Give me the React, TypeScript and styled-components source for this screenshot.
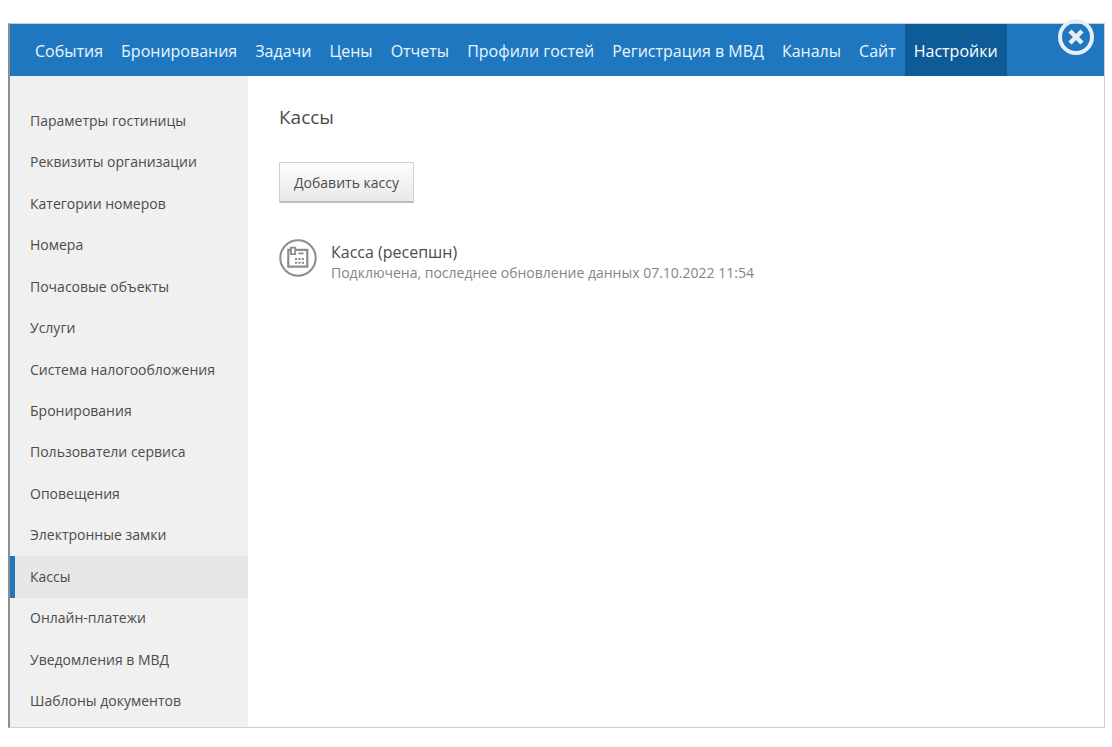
import React from "react";
import styled, { createGlobalStyle } from "styled-components";

const GlobalStyle = createGlobalStyle`
  * { box-sizing: border-box; }
  body {
    margin: 0;
    background: #fff;
    color: #4c4c4c;
    font-family: "Open Sans", "Noto Sans", sans-serif;
    font-size: 14px;
    line-height: 20px;
  }
`;

const Page = styled.div`
  padding: 23px 7px 19px 8px;
`;

const Frame = styled.div`
  border: 1px solid #cfcfcf;
  border-left: 2px solid #8e8e8e;
`;

const Header = styled.header`
  position: relative;
  display: flex;
  background: #1f78bf;
  padding-left: 16px;
`;

const Nav = styled.nav`
  display: flex;
`;

const NavLink = styled.a<{ $active?: boolean }>`
  padding: 17px 9px 15px;
  color: ${(p) => (p.$active ? "#fff" : "#e9f6ff")};
  background: ${(p) => (p.$active ? "#0e5c97" : "transparent")};
  font-size: 16px;
  line-height: 20px;
  text-decoration: none;
  white-space: nowrap;
`;

const CloseButton = styled.button`
  position: absolute;
  top: -6px;
  right: 9px;
  width: 38px;
  height: 38px;
  padding: 0;
  border: 0;
  background: none;
  cursor: pointer;

  svg { display: block; }
`;

const Columns = styled.div`
  display: grid;
  grid-template-columns: 238px 1fr;
`;

const Sidebar = styled.aside`
  padding: 24px 0 5px;
  background: #f0f0f0;
`;

const Menu = styled.ul`
  display: grid;
  grid-auto-rows: 1fr;
  min-height: 622px;
  margin: 0;
  padding: 0;
  list-style: none;
`;

const MenuLink = styled.a<{ $active?: boolean }>`
  display: flex;
  align-items: center;
  height: 100%;
  padding-left: 15px;
  border-left: 5px solid ${(p) => (p.$active ? "#1f78bf" : "transparent")};
  background: ${(p) => (p.$active ? "#e7e7e7" : "transparent")};
  color: #4c4c4c;
  text-decoration: none;
`;

const Content = styled.main`
  padding: 28px 31px;
`;

const Title = styled.h1`
  margin: 0 0 32px;
  font-size: 19px;
  font-weight: 400;
  line-height: 26px;
`;

const AddButton = styled.button`
  display: block;
  height: 41px;
  padding: 2px 14px 0;
  border: 1px solid #d0d0d0;
  border-bottom: 2px solid #bdbdbd;
  border-radius: 1px;
  background: linear-gradient(#fcfcfc, #e9e9e9);
  color: #4c4c4c;
  font: inherit;
  cursor: pointer;
`;

const DeskRow = styled.section`
  display: flex;
  gap: 14px;
  margin-top: 36px;
`;

const DeskName = styled.h2`
  margin: 2px 0 0;
  font-size: 16px;
  font-weight: 400;
  line-height: 22px;
`;

const DeskStatus = styled.p`
  margin: 0;
  color: #858585;
`;

const navItems = [
  "События", "Бронирования", "Задачи", "Цены", "Отчеты", "Профили гостей",
  "Регистрация в МВД", "Каналы", "Сайт", "Настройки",
];

const menuItems = [
  "Параметры гостиницы", "Реквизиты организации", "Категории номеров", "Номера",
  "Почасовые объекты", "Услуги", "Система налогообложения", "Бронирования",
  "Пользователи сервиса", "Оповещения", "Электронные замки", "Кассы",
  "Онлайн-платежи", "Уведомления в МВД", "Шаблоны документов",
];

const CloseIcon = () => (
  <svg width="38" height="38" viewBox="0 0 38 38" fill="none" stroke="#e9eef3" aria-hidden="true">
    <circle cx="19" cy="19" r="16" strokeWidth="4" />
    <path d="M13 13L25 25M25 13L13 25" strokeWidth="4.5" />
  </svg>
);

const DeskIcon = () => (
  <svg width="38" height="38" viewBox="0 0 38 38" fill="none" stroke="#8c8c8c" aria-hidden="true">
    <circle cx="19" cy="19" r="17.7" strokeWidth="2" />
    <path d="M12 10.8H9.3V27.6H28.3V10.8H17" strokeWidth="2.2" />
    <path d="M12 8.6H16.2V15.2H12Z" strokeWidth="1.8" />
    <path d="M19.4 14.4H24.6" strokeWidth="1.8" />
    <path d="M16 20H25.2M16 23.8H25.2" strokeWidth="2" strokeDasharray="2.2 1.2" />
  </svg>
);

export default function App() {
  return (
    <Page>
      <GlobalStyle />
      <Frame>
        <Header>
          <Nav>
            {navItems.map((item) => (
              <NavLink key={item} href="#" $active={item === "Настройки"}>{item}</NavLink>
            ))}
          </Nav>
          <CloseButton type="button" aria-label="Закрыть"><CloseIcon /></CloseButton>
        </Header>
        <Columns>
          <Sidebar>
            <Menu>
              {menuItems.map((item) => (
                <li key={item}>
                  <MenuLink href="#" $active={item === "Кассы"}>{item}</MenuLink>
                </li>
              ))}
            </Menu>
          </Sidebar>
          <Content>
            <Title>Кассы</Title>
            <AddButton type="button">Добавить кассу</AddButton>
            <DeskRow>
              <DeskIcon />
              <div>
                <DeskName>Касса (ресепшн)</DeskName>
                <DeskStatus>Подключена, последнее обновление данных 07.10.2022 11:54</DeskStatus>
              </div>
            </DeskRow>
          </Content>
        </Columns>
      </Frame>
    </Page>
  );
}
